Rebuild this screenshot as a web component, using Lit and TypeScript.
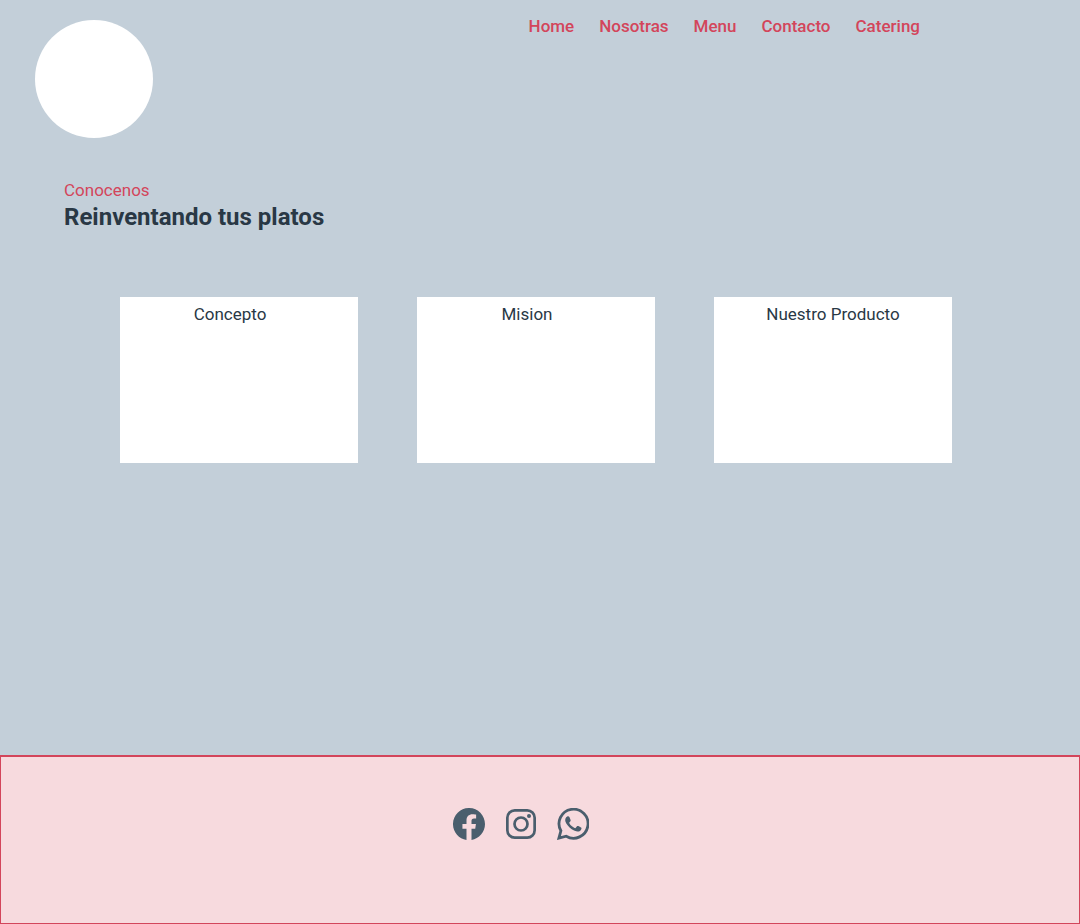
import { LitElement, html, css } from "lit";
import { customElement } from "lit/decorators.js";
import { classMap } from "lit/directives/class-map.js";

const links = ["Home", "Nosotras", "Menu", "Contacto", "Catering"];
const cards = [
  { title: "Concepto", shifted: true },
  { title: "Mision", shifted: true },
  { title: "Nuestro Producto", shifted: false },
];

@customElement("app-root")
export class AppRoot extends LitElement {
  static styles = css`
    :host {
      display: flex;
      flex-direction: column;
      min-height: 100vh;
      background: #c3cfd9;
      color: #293845;
      font-family: Roboto, "Liberation Sans", sans-serif;
      font-size: 17px;
      line-height: 24px;
    }
    .header {
      display: flex;
      justify-content: space-between;
      align-items: flex-start;
      padding: 20px 160px 0 35px;
    }
    .logo {
      width: 118px;
      height: 118px;
      border-radius: 50%;
      background: #fff;
    }
    .nav {
      display: flex;
      gap: 25px;
      margin-top: -6px;
    }
    .link {
      color: #d3455b;
      font-weight: 500;
      text-decoration: none;
    }
    .main {
      flex: 1;
    }
    .intro {
      padding: 40px 64px 0;
    }
    .kicker {
      margin: 0;
      color: #d3455b;
    }
    .title {
      margin: 0;
      font-size: 24px;
      line-height: 30px;
      font-weight: 700;
    }
    .cards {
      display: grid;
      grid-template-columns: repeat(3, 1fr);
      gap: 59px;
      padding: 65px 128px 40px 120px;
    }
    .card {
      box-sizing: border-box;
      min-height: 166px;
      padding-top: 5px;
      background: #fff;
      text-align: center;
    }
    .shifted {
      padding-right: 18px;
    }
    .card-title {
      margin: 0;
      font-size: 17px;
      font-weight: 400;
    }
    .footer {
      display: flex;
      justify-content: center;
      gap: 20px;
      padding: 51px 38px 83px 0;
      border: 1px solid #d3455b;
      border-top-width: 2px;
      background: #f7dade;
    }
    .social {
      display: block;
      height: 32px;
      color: #4a5e6d;
    }
    .icon {
      display: block;
      width: 32px;
      height: 32px;
    }
  `;

  render() {
    return html`
      <header class="header">
        <div class="logo"></div>
        <nav class="nav">
          ${links.map((l) => html`<a class="link" href="#">${l}</a>`)}
        </nav>
      </header>
      <main class="main">
        <div class="intro">
          <p class="kicker">Conocenos</p>
          <h1 class="title">Reinventando tus platos</h1>
        </div>
        <div class="cards">
          ${cards.map(
            (c) => html`<section class=${classMap({ card: true, shifted: c.shifted })}>
              <h2 class="card-title">${c.title}</h2>
            </section>`
          )}
        </div>
      </main>
      <footer class="footer">
        <a class="social" href="#" aria-label="Facebook">
          <svg class="icon" viewBox="0 0 16 16" fill="currentColor">
            <path d="M16 8.049c0-4.446-3.582-8.05-8-8.05C3.58 0-.002 3.603-.002 8.05c0 4.017 2.926 7.347 6.75 7.951v-5.625h-2.03V8.05H6.75V6.275c0-2.017 1.195-3.131 3.022-3.131.876 0 1.791.157 1.791.157v1.98h-1.009c-.993 0-1.303.621-1.303 1.258v1.51h2.218l-.354 2.326H9.25V16c3.824-.604 6.75-3.934 6.75-7.951z"/>
          </svg>
        </a>
        <a class="social" href="#" aria-label="Instagram">
          <svg class="icon" viewBox="0 0 32 32" fill="none" stroke="currentColor" stroke-width="2.7">
            <rect x="2.35" y="2.35" width="27.3" height="27.3" rx="7.4"/>
            <circle cx="16" cy="16" r="6.5"/>
            <circle cx="24" cy="8" r="2" fill="currentColor" stroke="none"/>
          </svg>
        </a>
        <a class="social" href="#" aria-label="WhatsApp">
          <svg class="icon" viewBox="0 0 32 32">
            <path fill="none" stroke="currentColor" stroke-width="2.8" d="M1.9 30.1 3.9 22.8A14.5 14.5 0 1 1 9.2 28.2Z"/>
            <path fill="currentColor" d="M10.2 8.4c.9-.4 1.8-.2 2.2.7l1.2 2.9c.3.8-.4 1.5-1.1 2.3-.4.4-.3.8 0 1.3 1.2 2 2.9 3.5 5.1 4.4.5.2.9.2 1.2-.2l1.2-1.5c.4-.5.8-.5 1.4-.2l2.6 1.3c.6.3.6.8.4 1.5-.4 1.6-2 2.6-3.8 2.6-1.5 0-4.1-1-6.2-2.5-2.3-1.7-5.3-5.2-6-7.6-.6-2.1.2-4.2 1.8-5z"/>
          </svg>
        </a>
      </footer>
    `;
  }
}
